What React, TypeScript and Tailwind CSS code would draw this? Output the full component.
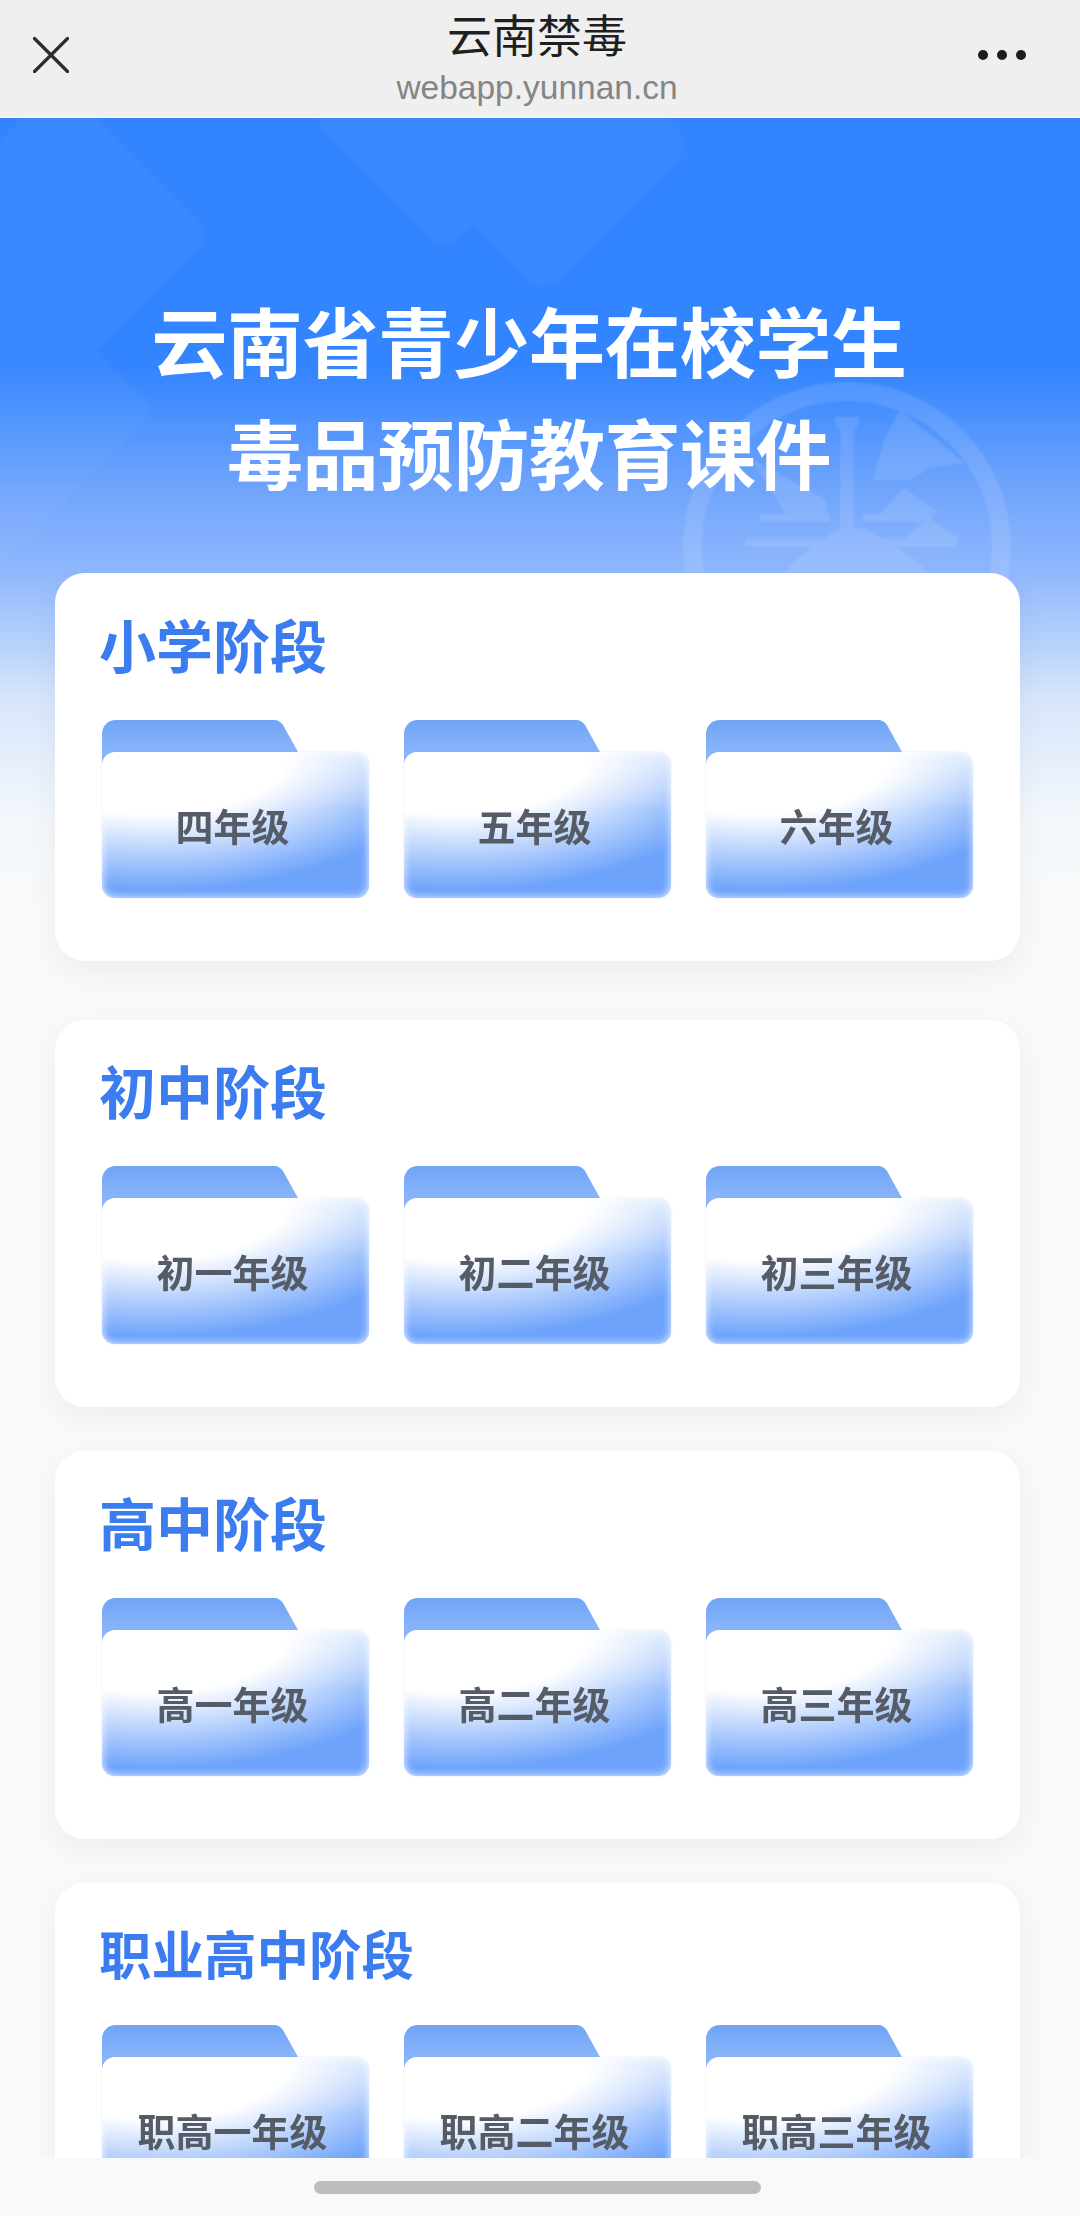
const sections = [
  { title: '小学阶段', grades: ['四年级', '五年级', '六年级'], wrap: 'mt-[66px]', head: 'pt-[38px] pb-[45px]', size: 'text-[57px]' },
  { title: '初中阶段', grades: ['初一年级', '初二年级', '初三年级'], wrap: 'mt-[59px]', head: 'pt-[37px] pb-[45px]', size: 'text-[57px]' },
  { title: '高中阶段', grades: ['高一年级', '高二年级', '高三年级'], wrap: 'mt-[44px]', head: 'pt-[38px] pb-[45px]', size: 'text-[57px]' },
  { title: '职业高中阶段', grades: ['职高一年级', '职高二年级', '职高三年级'], wrap: 'mt-[44px]', head: 'pt-[37px] pb-[41px]', size: 'text-[52.5px]' },
]

function HeroBackground() {
  return (
    <svg className="absolute left-0 top-0 blur-[1px]" width="1080" height="460" viewBox="0 0 1080 460" fill="#ffffff">
      {/* faint diamonds behind the heading */}
      <g opacity="0.035">
        <rect x="-49" y="8" width="218" height="218" rx="22" transform="rotate(45 60 117)" />
        <rect x="-111" y="181" width="222" height="222" rx="22" transform="rotate(45 0 292)" />
        <rect x="437" y="-79" width="212" height="212" rx="22" transform="rotate(45 543 27)" />
        <rect x="350" y="-95" width="190" height="190" rx="20" transform="rotate(45 445 0)" />
      </g>
      {/* watermark badge */}
      <g opacity="0.11">
        <circle cx="847" cy="428" r="154.5" fill="none" stroke="#ffffff" strokeWidth="19" />
        <path d="M835 299h24v8l-5 4v100h-14V311l-5-4z" />
        <path d="M760 396h70v8h-70zM862 396h70v8h-70zM745 421h212v8H745z" />
        <path d="M880 396l24-26 36 26zM905 421l24-22 30 22z" />
        <path d="M780 460c20-26 40-36 60-50h24c26 14 50 28 70 50z" />
        <path d="M900 292l65 53-35 5-20 12h-37l12-42z" />
        <path d="M750 340l76 42v14h-40z" />
      </g>
    </svg>
  )
}

function Folder({ label }: { label: string }) {
  return (
    <div className="flex flex-col">
      <svg className="block" width="196" height="44" viewBox="0 0 196 44">
        <defs>
          <linearGradient id="folderTab" x1="0" y1="0" x2="0" y2="1">
            <stop offset="0" stopColor="#6fa4f6" />
            <stop offset="0.75" stopColor="#8ab5fa" />
          </linearGradient>
        </defs>
        <path d="M0 44V14C0 6 6 0 14 0h158c4 0 7 2 9 5l15 27v12z" fill="url(#folderTab)" />
      </svg>
      <div className="relative -mt-[12px] flex h-[146px] items-start justify-center rounded-[13px] bg-[radial-gradient(ellipse_110%_95%_at_20%_0%,#ffffff_45%,rgba(255,255,255,0)_100%),linear-gradient(180deg,rgba(255,255,255,0.55),rgba(255,255,255,0)_40%),linear-gradient(#6ea3fb,#6ea3fb)] pt-[50px] shadow-[inset_0_0_9px_rgba(255,255,255,0.9),0_0_2px_rgba(110,163,251,0.25)]">
        <span className="-translate-x-[3px] text-[38px] leading-[46px] font-bold whitespace-nowrap text-[#555c66]">{label}</span>
      </div>
    </div>
  )
}

export default function App() {
  return (
    <div className="flex h-[2216px] w-[1080px] flex-col overflow-hidden bg-[#f8f9f9] font-['Noto_Sans_CJK_SC','Noto_Sans',sans-serif]">
      <header className="grid h-[118px] shrink-0 grid-cols-[200px_1fr_200px] items-center border-b-2 border-[#f6f6f6] bg-[#efefef]">
        <div className="pb-[7px] pl-[33px]">
          <svg className="block" width="36" height="36" viewBox="0 0 36 36" fill="none" stroke="#2c2c2c" strokeWidth="3.2" strokeLinecap="round">
            <path d="M1.5 1.5L34.5 34.5M34.5 1.5L1.5 34.5" />
          </svg>
        </div>
        <div className="flex flex-col items-center self-start pr-[6px] pt-[10px]">
          <span className="text-[45px] leading-[48px] text-[#1f1f1f]">云南禁毒</span>
          <span className="mt-[10px] font-['Liberation_Sans',sans-serif] text-[33.5px] leading-[40px] text-[#858585]">webapp.yunnan.cn</span>
        </div>
        <div className="flex justify-end gap-[9px] pb-[7px] pr-[54px]">
          <span className="h-[10px] w-[10px] rounded-full bg-[#1c1c1c]" />
          <span className="h-[10px] w-[10px] rounded-full bg-[#1c1c1c]" />
          <span className="h-[10px] w-[10px] rounded-full bg-[#1c1c1c]" />
        </div>
      </header>

      <main className="relative h-[2040px] shrink-0 overflow-hidden bg-[linear-gradient(180deg,#3385ff_0px,#3385ff_250px,#6fa4fc_370px,#8fb8fd_455px,#d8e6fb_582px,#f3f7fb_700px,#f8f9f9_790px)]">
        <HeroBackground />
        <div className="relative flex flex-col items-center pt-[165px]">
          <h1 className="-translate-x-[11px] text-center text-[76px] leading-[112px] font-bold tracking-[-0.5px] text-white">
            云南省青少年在校学生
            <br />
            毒品预防教育课件
          </h1>
        </div>
        <div className="relative flex flex-col pl-[55px] pr-[60px]">
          {sections.map((s) => (
            <section key={s.title} className={`${s.wrap} rounded-[30px] bg-white px-[47px] pb-[63px] shadow-[0_10px_30px_rgba(0,0,0,0.05)]`}>
              <div className={s.head}>
                <h2 className={`-ml-[3px] ${s.size} leading-[64px] font-bold text-[#3b7cf0]`}>{s.title}</h2>
              </div>
              <div className="grid grid-cols-3 gap-[35px]">
                {s.grades.map((g) => (
                  <Folder key={g} label={g} />
                ))}
              </div>
            </section>
          ))}
        </div>
      </main>

      <div className="flex flex-1 justify-center pr-[6px] pt-[23px]">
        <div className="h-[13px] w-[447px] rounded-full bg-[#bdbdbd]" />
      </div>
    </div>
  )
}
